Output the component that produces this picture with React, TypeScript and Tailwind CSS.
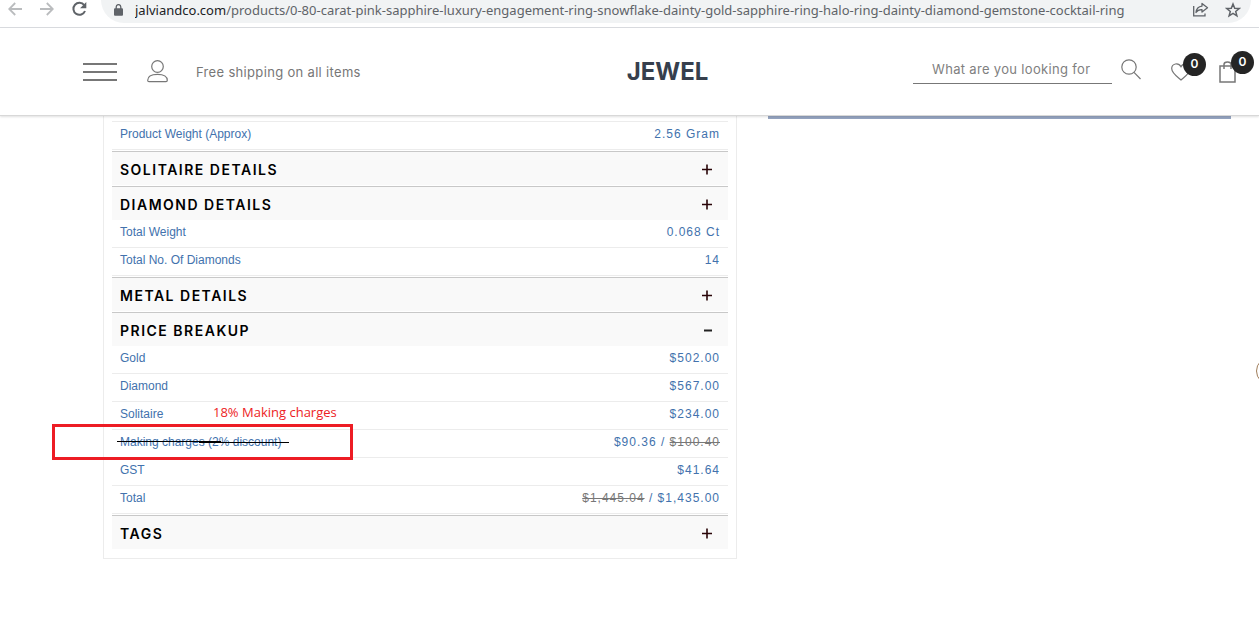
import { useState } from "react";

type Row = {
  label: string;
  value?: string;
  before?: string;
  after?: string;
  revised?: string;
};

type SectionProps = {
  title: string;
  rows?: Row[];
  sign?: "+" | "−";
};

function RevisionMark({ note }: { note: string }) {
  return (
    <>
      <span className="pointer-events-none absolute -top-1.5 -left-[60px] h-9 w-[301px] border-3 border-[#ed1c24]" />
      <span className="pointer-events-none absolute -top-7 left-[101px] font-['Open_Sans'] text-[13px] leading-5 whitespace-nowrap text-[#ed1c24]">
        {note}
      </span>
      <svg
        className="pointer-events-none absolute top-2.5 left-[5px]"
        width="172"
        height="4"
        viewBox="0 0 172 4"
        shapeRendering="crispEdges"
        aria-hidden="true"
      >
        <path d="M0 1.5H104M82 2.5H172" stroke="#000" strokeWidth="1" />
      </svg>
    </>
  );
}

function DetailTable({ rows, title }: { rows: Row[]; title: string }) {
  return (
    <table
      aria-label={title}
      className="w-full border-separate border-spacing-0 font-['Liberation_Sans',sans-serif] text-xs text-[#4272ad]"
    >
      <tbody>
        {rows.map((row) => (
          <tr key={row.label} className="h-7">
            <th
              scope="row"
              className="relative border-b border-[#ececec] p-0 pb-1 pl-2 text-left align-middle font-normal"
            >
              {row.label}
              {row.revised && <RevisionMark note={row.revised} />}
            </th>
            <td className="border-b border-[#ececec] p-0 pr-2 pb-1 text-right align-middle tracking-[1px]">
              {row.before && (
                <>
                  <s className="text-[#777]">{row.before}</s> /{" "}
                </>
              )}
              {row.value}
              {row.after && (
                <>
                  {" "}
                  / <s className="text-[#777]">{row.after}</s>
                </>
              )}
            </td>
          </tr>
        ))}
      </tbody>
    </table>
  );
}

function Section({ title, rows, sign = "+" }: SectionProps) {
  const [shown, setShown] = useState(true);
  return (
    <section className="mb-px">
      <h2>
        <button
          type="button"
          aria-expanded={shown && !!rows}
          onClick={() => setShown(!shown)}
          className="flex h-[34px] w-full items-center justify-between border-t border-[#c8c8c8] bg-[#f9f9f9] pt-0.5 pr-[15px] pl-2 text-sm font-semibold tracking-[1.5px] text-black"
        >
          <span>{title}</span>
          <svg width="11" height="11" viewBox="0 0 11 11" aria-hidden="true">
            {sign === "+" ? (
              <path d="M0 5.5H10M5 .5V10.5" stroke="#2a0508" strokeWidth="1.6" />
            ) : (
              <path d="M2 5.5H10" stroke="#222" strokeWidth="2" />
            )}
          </svg>
        </button>
      </h2>
      {rows && shown && <DetailTable rows={rows} title={title} />}
    </section>
  );
}

function BrowserBar() {
  return (
    <div className="flex h-7 items-start border-b border-[#dadce0] pr-2 pl-2 text-[#5f6368]">
      <div className="flex h-[18px] items-center">
        <button type="button" aria-label="Back" className="w-8 text-[#babcbe]">
          <svg width="14" height="14" viewBox="0 0 14 14" fill="none" stroke="currentColor" strokeWidth="1.8">
            <path d="M14 7H1.5M7.2 1L1.2 7L7.2 13" />
          </svg>
        </button>
        <button type="button" aria-label="Forward" className="w-8 text-[#babcbe]">
          <svg width="14" height="14" viewBox="0 0 14 14" fill="none" stroke="currentColor" strokeWidth="1.8">
            <path d="M0 7H12.5M6.8 1L12.8 7L6.8 13" />
          </svg>
        </button>
        <button type="button" aria-label="Reload" className="w-[29px]">
          <svg width="15" height="16" viewBox="0 0 15 16" fill="none">
            <path d="M12.2 4.2A6 6 0 1 0 13 10" stroke="#5f6368" strokeWidth="2" />
            <path d="M14.3 1V7.2H8.1Z" fill="#5f6368" />
          </svg>
        </button>
      </div>
      <div className="flex h-[23px] min-w-0 flex-1 items-center rounded-b-3xl bg-[#f1f3f4] pr-2.5 pb-1 pl-3">
        <svg width="11" height="12" viewBox="0 0 11 12" className="mr-[11px] shrink-0" aria-hidden="true">
          <rect x="1" y="4.2" width="9" height="7.5" rx="1" fill="#5f6368" />
          <path d="M3.2 5V2.9a2.3 2.3 0 0 1 4.6 0V5" fill="none" stroke="#5f6368" strokeWidth="1.3" />
        </svg>
        <p className="min-w-0 flex-1 overflow-hidden font-['Noto_Sans'] text-[13px] leading-[18px] whitespace-nowrap">
          <span className="text-[#202124]">jalviandco.com</span>
          /products/0-80-carat-pink-sapphire-luxury-engagement-ring-snowflake-dainty-gold-sapphire-ring-halo-ring-dainty-diamond-gemstone-cocktail-ring
        </p>
        <button type="button" aria-label="Share" className="mr-4 shrink-0">
          <svg width="17" height="15" viewBox="0 0 17 15" fill="none" stroke="#5f6368" strokeWidth="1.3">
            <path d="M1.7 4V13.8H13V11.5" />
            <path d="M10 1.5L15.5 5.8L10 10V7.6C7 7.5 5.2 8.5 4 10.5C4.4 6.8 6.5 4.5 10 4.1Z" strokeLinejoin="round" />
          </svg>
        </button>
        <button type="button" aria-label="Bookmark" className="shrink-0">
          <svg width="16" height="16" viewBox="0 0 16 16" fill="none" stroke="#5f6368" strokeWidth="1.5">
            <path d="M8 2L9.7 6.2L14.2 6.5L10.7 9.4L11.9 13.8L8 11.4L4.1 13.8L5.3 9.4L1.8 6.5L6.3 6.2Z" />
          </svg>
        </button>
      </div>
    </div>
  );
}

function Badge({ count }: { count: number }) {
  return (
    <span className="absolute -top-2.5 left-3 flex size-[23px] items-center justify-center rounded-full bg-[#252525] text-xs font-semibold text-white">
      {count}
    </span>
  );
}

function SiteHeader() {
  return (
    <header className="relative z-10 grid h-[88px] grid-cols-[1fr_auto_1fr] items-center border-b border-[#d8d8d8] bg-white pr-[7px] pl-[83px] shadow-[0_1px_2px_rgba(0,0,0,0.12)]">
      <div className="flex items-center">
        <button type="button" aria-label="Menu" className="mr-[30px]">
          <svg width="34" height="18" viewBox="0 0 34 18" className="block">
            <path d="M0 1H34M0 9H34M0 17H34" stroke="#777" strokeWidth="2" />
          </svg>
        </button>
        <a href="#account" aria-label="Account" className="mr-7">
          <svg width="21" height="23" viewBox="0 0 21 23" fill="none" stroke="#777" strokeWidth="1.2" className="block">
            <circle cx="10.5" cy="6.5" r="5.8" />
            <path d="M.7 20.3C.7 16.8 4 14.3 10.5 14.3S20.3 16.8 20.3 20.3Q20.3 21.7 19 21.7H2Q.7 21.7 .7 20.3Z" />
          </svg>
        </a>
        <p className="text-[13px] leading-5 tracking-wide whitespace-nowrap text-[#777]">Free shipping on all items</p>
      </div>
      <a href="#home" className="text-2xl font-bold text-[#363f4d]">
        JEWEL
      </a>
      <div className="flex items-center justify-end">
        <input
          type="text"
          aria-label="Search products"
          placeholder="What are you looking for"
          className="mr-[9px] mb-1 h-7 w-[199px] border-b border-[#777] pl-[19px] text-[13px] tracking-wide text-[#555] outline-none placeholder:text-[#808080]"
        />
        <button type="button" aria-label="Search" className="mr-[30px] mb-1">
          <svg width="20" height="21" viewBox="0 0 20 21" fill="none" stroke="#777" strokeWidth="1.2" className="block">
            <circle cx="8" cy="8" r="7.2" />
            <path d="M13 13.3L19.5 20" />
          </svg>
        </button>
        <a href="#wishlist" aria-label="Wishlist, 0 items" className="relative mr-7">
          <svg width="20" height="18" viewBox="0 0 20 18" fill="none" stroke="#777" strokeWidth="1.2" className="block">
            <path d="M10 17C6 13.5 .7 10 .7 5.5C.7.5 7.5-1 10 3.8C12.5-1 19.3.5 19.3 5.5C19.3 10 14 13.5 10 17Z" />
          </svg>
          <Badge count={0} />
        </a>
        <a href="#cart" aria-label="Cart, 0 items" className="relative mr-4">
          <svg width="17" height="22" viewBox="0 0 17 22" fill="none" stroke="#777" strokeWidth="1.5" className="block">
            <path d="M1 5H16V21H1ZM5 8V3.5Q5 1 8.5 1T12 3.5V8" />
          </svg>
          <Badge count={0} />
        </a>
      </div>
    </header>
  );
}

export default function App() {
  return (
    <div className="relative min-h-screen overflow-hidden bg-white font-['Inter',sans-serif]">
      <BrowserBar />
      <SiteHeader />
      <main className="grid grid-cols-[634fr_463fr] items-start gap-[31px] pr-7 pl-[103px]">
        <article className="border-x border-b border-[#ececec] px-2 pb-2">
          <div className="mt-[5px] mb-px border-t border-[#ececec]">
            <DetailTable title="Product details" rows={[{ label: "Product Weight (Approx)", value: "2.56 Gram" }]} />
          </div>
          <Section title="SOLITAIRE DETAILS" />
          <Section
            title="DIAMOND DETAILS"
            rows={[
              { label: "Total Weight", value: "0.068 Ct" },
              { label: "Total No. Of Diamonds", value: "14" },
            ]}
          />
          <Section title="METAL DETAILS" />
          <Section
            title="PRICE BREAKUP"
            sign="−"
            rows={[
              { label: "Gold", value: "$502.00" },
              { label: "Diamond", value: "$567.00" },
              { label: "Solitaire", value: "$234.00" },
              {
                label: "Making charges (2% discount)",
                value: "$90.36",
                after: "$100.40",
                revised: "18% Making charges",
              },
              { label: "GST", value: "$41.64" },
              { label: "Total", before: "$1,445.04", value: "$1,435.00" },
            ]}
          />
          <Section title="TAGS" />
        </article>
        <div className="h-[3px] bg-[#95a4c0]" />
      </main>
      <button
        type="button"
        aria-label="Chat"
        className="absolute top-[357px] -right-[25px] size-7 rounded-full border border-[#a07d5a] bg-white"
      />
    </div>
  );
}
